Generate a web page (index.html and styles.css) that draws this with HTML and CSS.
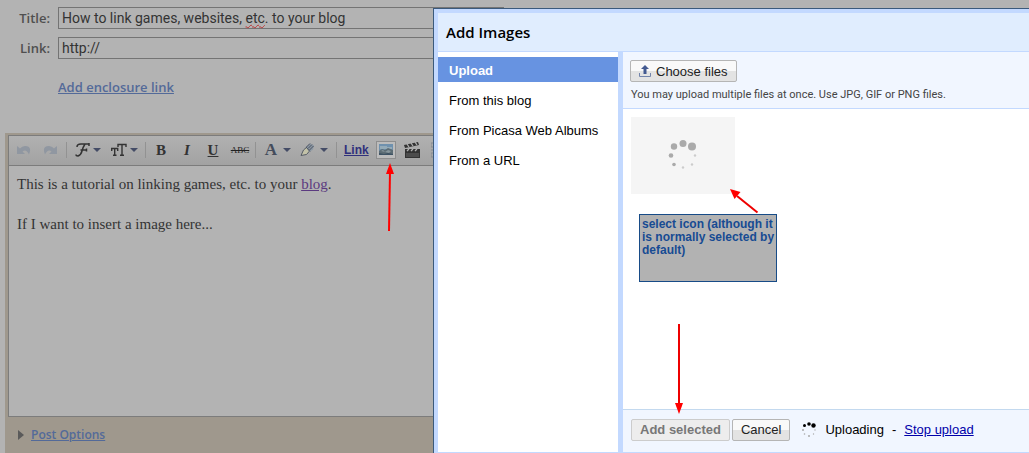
FILE: index.html
```html
<!DOCTYPE html>
<html lang="en">
<head>
<meta charset="utf-8">
<title>Add Images</title>
<link rel="stylesheet" href="styles.css">
</head>
<body>
<main class="page">
  <form class="fields">
    <label id="title-label">Title:</label>
    <div class="field" role="textbox" aria-labelledby="title-label" contenteditable="true" spellcheck="false">How to link games, websites, <span class="typo">etc</span>. to your blog</div>
    <label for="link">Link:</label>
    <input class="field" id="link" type="text" value="http://">
    <a class="enclosure" href="#">Add enclosure link</a>
  </form>
  <section class="editor">
    <div class="toolbar">
      <button class="tool undo" aria-label="Undo"><svg width="16" height="12" viewBox="0 0 16 12"><path d="M1 2v8h8L6.500 7.500Q10 4.500 13 10.500Q16.500 2 9 2Q6 2 4 4.500Z" fill="#9097a1"/></svg></button>
      <button class="tool redo" aria-label="Redo"><svg width="16" height="12" viewBox="0 0 16 12"><path d="M15 2v8H7L9.500 7.500Q6 4.500 3 10.500Q-.5 2 7 2Q10 2 12 4.500Z" fill="#9097a1"/></svg></button>
      <i class="sep"></i>
      <button class="tool font" aria-label="Font"><svg width="29" height="16" viewBox="0 0 29 16"><path d="M2 5Q2 2 6 2h8.500M10 2Q8 5 7 9T3 14Q1 14 1 12.500M5.500 8h6M11.500 6.500v3M14 1v3" fill="none" stroke="#333" stroke-width="1.500"/><path d="M18 6h8l-4 4z" fill="#444c66"/></svg></button>
      <button class="tool size" aria-label="Font size"><svg width="29" height="16" viewBox="0 0 29 16"><path d="M.7 9V6.500h6V9M3.700 6.500V13M2 13.300h3.500M7 5V2.500h8V5M11 2.500V13M9 13.300h4" fill="none" stroke="#333" stroke-width="1.400"/><path d="M19 6h8l-4 4z" fill="#444c66"/></svg></button>
      <i class="sep"></i>
      <button class="tool letter bold">B</button>
      <button class="tool letter italic">I</button>
      <button class="tool letter under">U</button>
      <button class="tool strike">ABC</button>
      <i class="sep"></i>
      <button class="tool color" aria-label="Text color"><span>A</span><svg width="8" height="4" viewBox="0 0 8 4"><path d="M0 0h8L4 4z" fill="#444c66"/></svg></button>
      <button class="tool pen" aria-label="Highlight"><svg width="28" height="14" viewBox="0 0 28 14"><path d="M1 12.500L3.500 7 7 4l3 3.500-3.500 4z" fill="#c3c2a8" stroke="#555c66"/><path d="M6 4l4-3.500 4 2-1 4-3.500 2.500z" fill="#8c98a4"/><path d="M6.500 4l3.500-3.500M8 5.500L12 1.500M9.500 7l4-4M6 4l4 4.500" stroke="#4c5360"/><path d="M20 5h8l-4 4z" fill="#444c66"/></svg></button>
      <i class="sep"></i>
      <a class="insert-link" href="#">Link</a>
      <button class="tool picture" aria-label="Insert image"><svg width="14" height="11" viewBox="0 0 14 11"><path fill="#6f91ae" d="M0 0h14v11H0z"/><path fill="#94abb8" d="M1 2h7v1h5v2H1z"/><path fill="#5c6c74" d="M0 7l3-2 3 1 3-2 5 2v5H0z"/><path fill="#87969c" d="M2 7l2-1 2 2 3-2 3 1-2 2-4-1z"/><path fill="#3d5263" d="M0 9l5 1 4-1 5 1v1H0z"/></svg></button>
      <button class="tool clip" aria-label="Insert video"><svg width="16" height="16" viewBox="0 0 16 16"><path fill="#333" d="M1 7h15v9H1z"/><path fill="#4c4c4c" d="M2 11h13v4H2z"/><path fill="#333" d="M0 3l14-3 1 3L1 6z"/><path d="M3 2l2 3M7 1l2 3M11 0l2 3M3 9l2-2M7 9l2-2M11 9l2-2" stroke="#b0b0b0" stroke-width="1.300"/></svg></button>
      <button class="tool quote" aria-label="Quote"><svg width="16" height="16" viewBox="0 0 16 16"><path d="M0 1h4v4H0zM6 2h10M6 5h10M0 8h16M0 11h4v4H0zM6 12h10M6 15h10" stroke="#858a93" fill="none"/></svg></button>
    </div>
    <div class="content">
      <p>This is a tutorial on linking games, etc. to your <a href="#">blog</a>.</p>
      <p>If I want to insert a image here...</p>
    </div>
    <div class="options"><i></i><a href="#">Post Options</a></div>
  </section>
</main>

<section class="dialog" role="dialog" aria-labelledby="heading">
  <h1 id="heading">Add Images</h1>
  <div class="panes">
    <nav>
      <a class="active" href="#">Upload</a>
      <a href="#">From this blog</a>
      <a href="#">From Picasa Web Albums</a>
      <a href="#">From a URL</a>
    </nav>
    <div class="upload">
      <header>
        <button class="btn choose"><svg width="12" height="12" viewBox="0 0 12 12"><path d="M6 0l4 4H7.500v5h-3V4H2z" fill="#435a91"/><path d="M.5 8v3.500h11V8" fill="none" stroke="#7385ac"/></svg>Choose files</button>
        <p>You may upload multiple files at once. Use JPG, GIF or PNG files.</p>
      </header>
      <div class="files">
        <div class="thumb"><svg width="30" height="30" viewBox="0 0 30 30"><g fill="#aaa"><circle cx="15" cy="3.500" r="3.500"/><circle cx="24" cy="6.500" r="4"/><circle cx="6" cy="6.500" r="3.200"/><circle cx="3" cy="15.500" r="2.300"/><circle cx="6" cy="24.500" r="1.800"/></g><g fill="#ccc"><circle cx="15" cy="27.500" r="1.200"/><circle cx="24" cy="24.500" r="1.200"/><circle cx="27" cy="15.500" r="1.200"/></g></svg></div>
      </div>
      <footer>
        <button class="btn add" disabled>Add selected</button>
        <button class="btn">Cancel</button>
        <svg class="spinner" width="14" height="15" viewBox="0 0 14 15"><circle cx="7" cy="2" r="1.800"/><circle cx="11.500" cy="3.500" r="2.200"/><circle cx="2.500" cy="3.500" r="1.500"/><g fill="#aaa"><circle cx="1" cy="8" r="1"/><circle cx="2.500" cy="12" r=".8"/><circle cx="7" cy="14" r="1"/><circle cx="11.500" cy="12" r=".7"/><circle cx="13" cy="8" r=".7"/></g></svg>
        <span>Uploading</span><span class="dash">-</span><a href="#">Stop upload</a>
      </footer>
    </div>
  </div>
</section>

<div class="note">select icon (although it is normally selected by default)</div>
<svg class="arrow to-picture" width="10" height="70" viewBox="0 0 10 70"><path d="M4 69L5 10" stroke="red" stroke-width="2"/><path d="M5 1L1 12h8z" fill="red"/></svg>
<svg class="arrow to-thumb" width="30" height="26" viewBox="0 0 30 26"><path d="M28.500 24.500L8 8" stroke="#e00" stroke-width="2"/><path d="M1 1l4.500 10L11.500 4z" fill="red"/></svg>
<svg class="arrow to-add" width="10" height="92" viewBox="0 0 10 92"><path d="M5 1v80" stroke="#e00" stroke-width="2"/><path d="M1 80h8L5 91z" fill="red"/></svg>
</body>
</html>
```
FILE: styles.css
```css
* { box-sizing: border-box; }
body {
  margin: 0;
  background: #b3b3b3;
  font-family: "Liberation Sans", Arial, sans-serif;
  font-size: 13px;
  color: #000;
}
p, h1 { margin: 0; }
button { font: inherit; padding: 0; margin: 0; }
.page {
  display: flex;
  flex-direction: column;
  height: 100vh;
  overflow: hidden;
}
.fields {
  display: grid;
  grid-template-columns: 50px 446px;
  column-gap: 8px;
  row-gap: 8px;
  padding-top: 7px;
  align-items: center;
}
.fields label {
  text-align: right;
  font: 600 13px/22px "Open Sans", sans-serif;
  color: #4f4f4f;
}
.field {
  width: 100%;
  height: 22px;
  padding: 0 3px;
  border: 1px solid #747474;
  background: transparent;
  font: 14px/20px Roboto, sans-serif;
  color: #333;
}
.typo { text-decoration: underline wavy #b33 1px; }
.enclosure {
  grid-column: 2;
  margin-top: 10px;
  justify-self: start;
  font: 600 13px/20px "Open Sans", sans-serif;
  color: #536a99;
}
.editor {
  flex: 1;
  display: flex;
  flex-direction: column;
  margin: 36px 0 0 5px;
  padding: 2px 0 0 3px;
  background: #9f988d;
}
.toolbar {
  display: flex;
  align-items: center;
  height: 31px;
  border: solid #7c7c7c;
  border-width: 1px 0 1px 1px;
  padding: 0 0 2px 7px;
  background: linear-gradient(#b1b1b1, #a2a2a2);
}
.tool {
  flex: none;
  display: flex;
  align-items: center;
  justify-content: center;
  height: 20px;
  border: 0;
  background: none;
  color: #333;
}
.sep { flex: none; width: 1px; height: 16px; background: #929292; }
.undo { width: 16px; }
.redo { width: 16px; margin: 0 8px 0 10px; }
.font { width: 29px; margin: 0 7px 0 8px; }
.size { width: 29px; margin-right: 5px; }
.letter { width: 26px; font: bold 15px/20px "Liberation Serif", serif; }
.bold { margin-left: 2px; }
.italic { font-style: italic; }
.under { text-decoration: underline; }
.strike { width: 28px; margin-right: 1px; font: 9px/20px "Liberation Serif", serif; color: #222; text-decoration: line-through; }
.color { width: 28px; gap: 6px; margin: 0 8px; font: bold 17px/18px "Liberation Serif", serif; color: #444c5c; }
.pen { width: 28px; margin-right: 8px; }
.insert-link { margin: 0 7px; font-weight: bold; font-size: 12px; color: #30307c; }
.picture { width: 20px; height: 18px; border: 1px solid #8e8e8e; background: #bcbcbc; }
.clip { width: 16px; margin: 0 11px 0 8px; }
.quote { width: 16px; }
.content {
  flex: 1;
  padding: 8px;
  border: solid #7c7c7c;
  border-width: 0 0 1px 1px;
  background: #b3b3b3;
  font: 15px/20px "Liberation Serif", serif;
  color: #333;
}
.content p + p { margin-top: 20px; }
.content a { color: #5b3a80; }
.options {
  display: flex;
  align-items: center;
  gap: 7px;
  height: 36px;
  padding-left: 10px;
}
.options i { border: solid transparent; border-width: 5px 0 5px 6px; border-left-color: #5a5a5a; }
.options a { font: 600 12px/20px "Open Sans", sans-serif; color: #536a99; }

.dialog {
  position: absolute;
  inset: 8px 0 0 433px;
  display: flex;
  flex-direction: column;
  border: solid #3b5a7c;
  border-width: 1px 0 0 1px;
  background: #fff;
  box-shadow: inset 4px 4px 0 #c3d9ff;
  padding: 4px 0 0 4px;
}
.dialog h1 {
  height: 39px;
  padding-left: 8px;
  border-bottom: 1px solid #c3d9ff;
  background: #e0edfe;
  font: 600 15px/39px "Open Sans", sans-serif;
}
.panes {
  flex: 1;
  display: grid;
  grid-template-columns: 185px 1fr;
  border-bottom: 1px solid #c3d9ff;
}
nav {
  border-right: 5px solid #c3d9ff;
  padding-top: 5px;
  display: flex;
  flex-direction: column;
  gap: 5px;
}
nav a {
  height: 25px;
  padding-left: 11px;
  line-height: 27px;
  color: #000;
  text-decoration: none;
}
nav .active { background: #6793e1; color: #fff; font-weight: bold; }
.upload { display: flex; flex-direction: column; }
.upload header {
  height: 57px;
  padding: 8px 7px;
  border-bottom: 1px solid #c3d9ff;
  background: #f1f6ff;
}
.upload header p { margin-top: 5px; padding-left: 1px; font: 11px/16px Roboto, sans-serif; color: #444; }
.btn {
  display: inline-flex;
  align-items: center;
  height: 22px;
  padding: 0 8px;
  border: 1px solid #b5b5b5;
  border-radius: 2px;
  background: linear-gradient(#f9f9f9 50%, #e3e3e3 50%);
  color: #222;
}
.choose { gap: 5px; }
.add { font-weight: bold; border-color: #ccc; background: #ededed; color: #777; }
.files { flex: 1; padding: 8px; }
.thumb {
  display: flex;
  align-items: center;
  justify-content: center;
  width: 104px;
  height: 77px;
  padding-bottom: 2px;
  background: #f5f5f5;
}
.upload footer {
  display: flex;
  align-items: center;
  height: 43px;
  padding: 0 8px 3px;
  border-top: 1px solid #c3d9ef;
  background: #f1f6ff;
}
.upload footer .btn { margin-right: 2px; }
.spinner { margin: 0 9px 0 10px; }
.dash { margin: 0 8px; }
.upload footer a { color: #00a; }
.note {
  position: absolute;
  left: 639px;
  top: 214px;
  width: 138px;
  height: 68px;
  padding: 3px 0 0 2px;
  border: 1px solid #174b87;
  background: #b2b2b2;
  font: bold 12px/13px "Liberation Sans", sans-serif;
  color: #174b93;
}
.arrow { position: absolute; }
.to-picture { left: 385px; top: 162px; }
.to-thumb { left: 729px; top: 188px; }
.to-add { left: 674px; top: 323px; }
```
